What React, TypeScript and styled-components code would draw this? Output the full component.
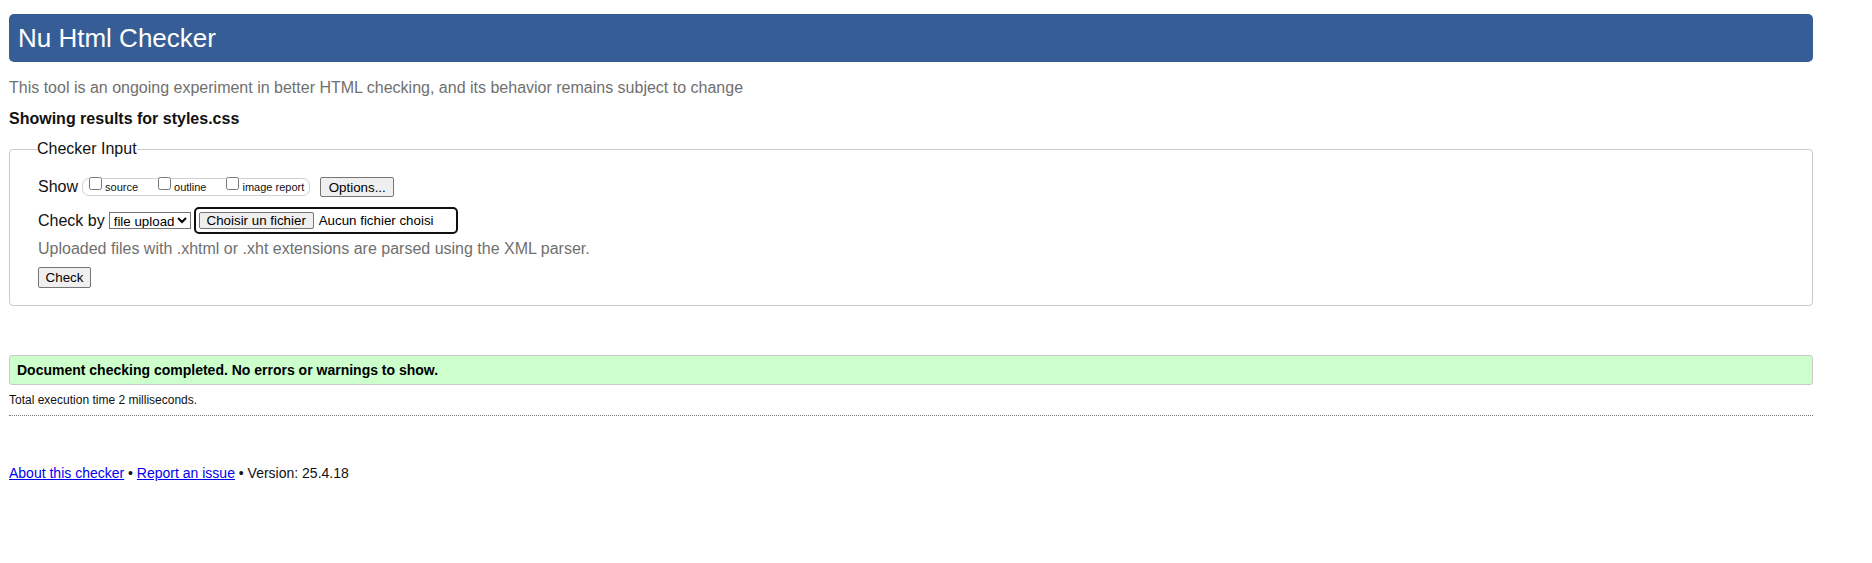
import styled, { createGlobalStyle } from 'styled-components'

const GlobalStyle = createGlobalStyle`
  html, body {
    margin: 0;
    padding: 0;
    background: #fff;
  }
  body {
    font-family: Arial, "Liberation Sans", Helvetica, sans-serif;
    font-size: 16px;
    color: #111;
  }
`

const Page = styled.div`
  padding: 14px 59px 40px 9px;
`

const Title = styled.h1`
  margin: 0;
  height: 48px;
  display: flex;
  align-items: center;
  padding: 0 9px;
  background: #365d95;
  color: #fff;
  border-radius: 5px;
  font-size: 26px;
  font-weight: normal;
`

const Intro = styled.p`
  margin: 17px 0 0;
  line-height: 18px;
  color: #707070;
`

const ResultsFor = styled.p`
  margin: 13px 0 0;
  line-height: 18px;
  font-weight: bold;
`

const InputBox = styled.fieldset`
  margin: 12px 0 0;
  padding: 19px 28px 17px;
  border: 1px solid #cbcbcb;
  border-radius: 4px;
  display: flex;
  flex-direction: column;
`

const Legend = styled.legend`
  margin-left: -1px;
  padding: 0;
  line-height: 18px;
`

const Row = styled.div<{ $top?: number; $height: number }>`
  display: flex;
  align-items: center;
  height: ${p => p.$height}px;
  margin-top: ${p => p.$top || 0}px;
  white-space: nowrap;
`

const RowLabel = styled.span`
  margin-right: 4px;
`

const ShowGroup = styled.span`
  display: inline-flex;
  align-items: flex-start;
  height: 18px;
  box-sizing: border-box;
  padding: 0 5px 0 2px;
  border: 1px solid #d0d0d0;
  border-radius: 7px;
  margin-right: 10px;
`

const ShowOption = styled.label<{ $last?: boolean }>`
  display: inline-flex;
  align-items: flex-start;
  margin-right: ${p => (p.$last ? 0 : 16)}px;
  font-size: 11px;
  line-height: 13px;

  input {
    width: 13px;
    height: 13px;
    margin: -2px 3px 0 4px;
  }

  span {
    padding-top: 2px;
  }
`

const Button = styled.button<{ $w: number; $h: number }>`
  width: ${p => p.$w}px;
  height: ${p => p.$h}px;
  padding: 0;
  font-family: Arial, "Liberation Sans", sans-serif;
  font-size: 13.33px;
  color: #000;
  background: #efefef;
  border: 1px solid #767676;
  border-radius: 2px;
`

const Select = styled.select`
  width: 82px;
  height: 17px;
  padding: 0;
  margin-right: 3px;
  font-family: Arial, "Liberation Sans", sans-serif;
  font-size: 13.33px;
  color: #000;
  background: #fff;
  border: 1px solid #767676;
  border-radius: 0;
`

const FileField = styled.span`
  display: inline-flex;
  align-items: center;
  box-sizing: border-box;
  width: 264px;
  height: 27px;
  padding: 0 3px;
  border: 2px solid #101010;
  border-radius: 5px;
  font-size: 13.33px;
  color: #000;
`

const FileName = styled.span`
  margin-left: 5px;
`

const Hint = styled.p`
  margin: 6px 0 0;
  line-height: 18px;
  color: #707070;
`

const Success = styled.p`
  margin: 49px 0 0;
  height: 30px;
  box-sizing: border-box;
  display: flex;
  align-items: center;
  padding: 0 7px;
  background: #ccffcc;
  border: 1px solid #c8c8c8;
  border-radius: 3px;
  font-size: 14px;
  font-weight: bold;
  color: #000;
`

const ExecTime = styled.p`
  margin: 8px 0 0;
  font-size: 12px;
  line-height: 14px;
`

const Rule = styled.hr`
  margin: 8px 0 0;
  border: 0;
  border-top: 1px dotted #777;
`

const Footer = styled.p`
  margin: 49px 0 0;
  font-size: 14px;
  line-height: 16px;
  color: #111;
`

const FooterLink = styled.a`
  color: #0000ee;
  text-decoration: underline;
`

export default function App() {
  return (
    <>
      <GlobalStyle />
      <Page>
        <Title>Nu Html Checker</Title>
        <Intro>This tool is an ongoing experiment in better HTML checking, and its behavior remains subject to change</Intro>
        <ResultsFor>Showing results for styles.css</ResultsFor>

        <InputBox>
          <Legend>Checker Input</Legend>
          <Row $height={20}>
            <RowLabel>Show</RowLabel>
            <ShowGroup>
              <ShowOption><input type="checkbox" /><span>source</span></ShowOption>
              <ShowOption><input type="checkbox" /><span>outline</span></ShowOption>
              <ShowOption $last><input type="checkbox" /><span>image report</span></ShowOption>
            </ShowGroup>
            <Button $w={74} $h={20}>Options...</Button>
          </Row>
          <Row $top={10} $height={27}>
            <RowLabel>Check by</RowLabel>
            <Select defaultValue="file">
              <option value="address">address</option>
              <option value="file">file upload</option>
              <option value="text">text input</option>
            </Select>
            <FileField>
              <Button $w={115} $h={17}>Choisir un fichier</Button>
              <FileName>Aucun fichier choisi</FileName>
            </FileField>
          </Row>
          <Hint>Uploaded files with .xhtml or .xht extensions are parsed using the XML parser.</Hint>
          <Row $top={9} $height={21}>
            <Button $w={53} $h={21}>Check</Button>
          </Row>
        </InputBox>

        <Success>Document checking completed. No errors or warnings to show.</Success>
        <ExecTime>Total execution time 2 milliseconds.</ExecTime>
        <Rule />

        <Footer>
          <FooterLink href="#about">About this checker</FooterLink>
          {' • '}
          <FooterLink href="#issue">Report an issue</FooterLink>
          {' • Version: 25.4.18'}
        </Footer>
      </Page>
    </>
  )
}
